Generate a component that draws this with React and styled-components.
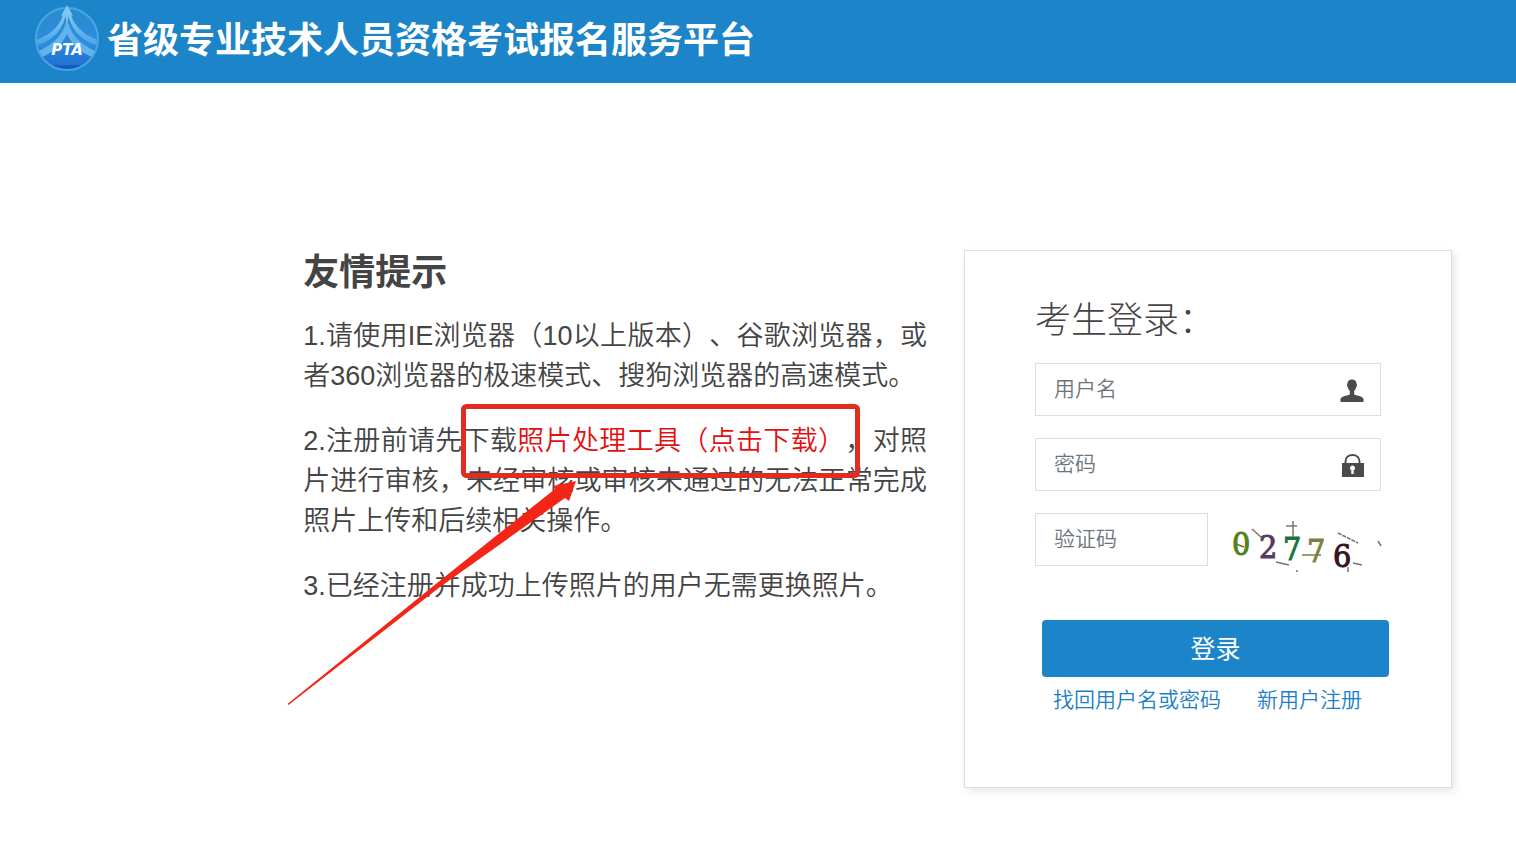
import styled, { createGlobalStyle } from 'styled-components';
import React, { useState } from 'react';

const GlobalStyle = createGlobalStyle`
* {
    box-sizing: border-box;
}
body {
    margin: 0;
    background: #fff;
    color: #444;
    font-family: "Liberation Sans", "Noto Sans CJK SC", sans-serif;
    text-spacing-trim: space-all;
}
`

const Logo = () => (
    <svg width="68" height="72" viewBox="0 0 68 72" role="img" aria-label="PTA">
        <defs>
            <linearGradient id="ball" x1="0" y1="0" x2="0" y2="1">
                <stop offset="0" stopColor="#2a8bcd" />
                <stop offset="0.6" stopColor="#2b8de0" />
                <stop offset="1" stopColor="#0c55bd" />
            </linearGradient>
            <linearGradient id="ray" x1="0" y1="0" x2="0" y2="1">
                <stop offset="0" stopColor="#86ccf4" />
                <stop offset="1" stopColor="#4aa4e6" />
            </linearGradient>
            <clipPath id="round">
                <circle cx="34" cy="36" r="32" />
            </clipPath>
        </defs>
        <circle cx="34" cy="36" r="32" fill="url(#ball)" />
        <g clipPath="url(#round)">
            <path d="M31 8C29 20 20 31 3 37L5 42C22 37 31 24 33 10Z" fill="url(#ray)" />
            <path d="M37 8C39 20 48 31 65 37L63 42C46 37 37 24 35 10Z" fill="url(#ray)" />
            <path d="M34 14C32 29 23 40 6 48L9 54C20 50 29 42 34 31C39 42 48 50 59 54L62 48C45 40 36 29 34 14Z" fill="#62b3eb" />
            <path d="M34 31C29 42 20 50 9 54L14 62H54L59 54C48 50 39 42 34 31Z" fill="#2a7fd8" opacity="0.6" />
        </g>
        <circle cx="34" cy="36" r="31" fill="none" stroke="#4ba5e0" strokeWidth="2" />
        <path d="M34 2L28 13L32 12L34 20L36 12L40 13Z" fill="#7dc6f1" />
        <text x="34" y="52" textAnchor="middle" fill="#fff" fontFamily="DejaVu Sans" fontSize="15" fontWeight="700" fontStyle="italic">PTA</text>
    </svg>
)

const UserIcon = () => (
    <svg width="24" height="24" viewBox="0 0 24 24" fill="#4b4b4b">
        <path d="M12 1.500C9 1.500 7.300 3.500 7.300 6.300C6.600 6.500 7 8.500 7.800 9.100C8.200 11 9 12.200 9.800 13V16.500C7 18 0.500 18 0.500 21.500V24H23.500V21.500C23.500 18 17 18 14.200 16.500V13C15 12.200 15.800 11 16.200 9.100C17 8.500 17.400 6.500 16.700 6.300C16.700 3.500 15 1.500 12 1.500Z" />
    </svg>
)

const LockIcon = () => (
    <svg width="24" height="24" viewBox="0 0 24 24">
        <path d="M5.500 11V8.500C5.500 4.500 8.500 2 12.500 2S19.500 4.500 19.500 8.500V11" fill="none" stroke="#4b4b4b" strokeWidth="2" />
        <path d="M2 10H24V24H2Z" fill="#4b4b4b" />
        <path d="M12.500 12.500A2.500 2.500 0 0 0 11.300 17.200V21H13.700V17.200A2.500 2.500 0 0 0 12.500 12.500Z" fill="#fff" />
    </svg>
)

const digits = [
    { value: "0", x: 2, y: 42, color: "#55801c" },
    { value: "2", x: 29, y: 45, color: "#573a5c" },
    { value: "7", x: 53, y: 47, color: "#17733b" },
    { value: "7", x: 77, y: 49, color: "#7d7e45" },
    { value: "6", x: 103, y: 54, color: "#35161f" },
]

const Captcha = () => (
    <svg width="152" height="66" viewBox="0 0 152 66" role="img" aria-label="验证码图片">
        <g fontFamily="DejaVu Serif Condensed, DejaVu Serif" fontSize="32" strokeWidth="1">
            {digits.map((d, i) => <text key={i} x={d.x} y={d.y} fill={d.color} stroke={d.color}>{d.value}</text>)}
        </g>
        <g fill="none" stroke="#80716f" strokeWidth="1.500">
            <path d="M22 16L32 25M63 8V24M56 13H67M46 49L59 52M67 57V59M123 50L132 52M118 54V59M148 28L151 33" />
            <path d="M108 20L128 30" strokeDasharray="4 1" />
            <path d="M72 42H91" stroke="#7d7e45" />
            <path d="M6 31L14 34" stroke="#55801c" />
        </g>
    </svg>
)

const App = () => {
    const [userName, setUserName] = useState("");
    const [password, setPassword] = useState("");
    const [code, setCode] = useState("");

    function handleSubmit (event) {
        event.preventDefault();
    };

return (
    <>
        <GlobalStyle />
        <Header>
            <Logo />
            <SiteTitle>省级专业技术人员资格考试报名服务平台</SiteTitle>
        </Header>
        <Main>
            <Tips>
                <TipsTitle>友情提示</TipsTitle>
                <Tip>1.请使用IE浏览器（10以上版本）、谷歌浏览器，或者360浏览器的极速模式、搜狗浏览器的高速模式。</Tip>
                <Tip>2.注册前请先下载<ToolLink href="#download">照片处理工具（点击下载）</ToolLink>，对照片进行审核，未经审核或审核未通过的无法正常完成照片上传和后续相关操作。</Tip>
                <Tip>3.已经注册并成功上传照片的用户无需更换照片。</Tip>
                <Marker width="576" height="304" viewBox="0 0 576 304" aria-hidden="true">
                    <rect x="176.500" y="3.500" width="394" height="69" rx="3" fill="none" stroke="#e22c20" strokeWidth="5" />
                    <path d="M0.500 301L150 180L268 86L266 83L289 78L282 98L278 95L153 184L1.500 302Z" fill="#f32517" />
                </Marker>
            </Tips>
            <LoginCard onSubmit={handleSubmit}>
                <LoginTitle>考生登录：</LoginTitle>
                <Field>
                    <Input aria-label="用户名" placeholder="用户名" value={userName} onChange={event => setUserName(event.target.value)} />
                    <UserIcon />
                </Field>
                <Field>
                    <Input aria-label="密码" type="password" placeholder="密码" value={password} onChange={event => setPassword(event.target.value)} />
                    <LockIcon />
                </Field>
                <CodeRow>
                    <Field>
                        <Input aria-label="验证码" placeholder="验证码" value={code} onChange={event => setCode(event.target.value)} />
                    </Field>
                    <Captcha />
                </CodeRow>
                <Submit type="submit">登录</Submit>
                <Links>
                    <a href="#recover">找回用户名或密码</a>
                    <a href="#register">新用户注册</a>
                </Links>
            </LoginCard>
        </Main>
    </>
);

};

export default App;


const Header = styled.header`
display: flex;
align-items: flex-start;
gap: 6px;
height: 83px;
padding: 3px 33px 0;
background: #1c84c8;
`

const SiteTitle = styled.h1`
margin: 0;
color: #fff;
font-size: 36px;
line-height: 76px;
font-weight: 700;
`

const Main = styled.main`
display: grid;
grid-template-columns: minmax(0, 1fr) 488px;
align-items: start;
gap: 37px;
padding: 167px 64px 59px 20%;
`

const Tips = styled.section`
position: relative;
`

const TipsTitle = styled.h2`
margin: 0 0 20px;
font-size: 36px;
line-height: 46px;
`

const Tip = styled.p`
margin: 0 0 25px;
font-size: 27px;
line-height: 40px;
font-weight: 350;
text-align: justify;
`

const ToolLink = styled.a`
color: #e60f0f;
text-decoration: none;
`

/* hand-drawn box and arrow lying over the second tip */
const Marker = styled.svg`
position: absolute;
top: 153px;
left: -16px;
pointer-events: none;
`

const LoginCard = styled.form`
display: flex;
flex-direction: column;
padding: 46px 62px 72px 70px;
border: 1px solid #ddd;
box-shadow: 3px 3px 8px rgba(0, 0, 0, 0.1);
`

const LoginTitle = styled.h2`
margin: 0 0 18px;
font-size: 36px;
line-height: 48px;
font-weight: 300;
`

const Field = styled.div`
display: flex;
align-items: center;
height: 53px;
margin: 0 8px 22px 0;
padding: 0 16px 0 18px;
border: 1px solid #ddd;
`

const Input = styled.input`
flex: 1;
min-width: 0;
padding: 0 0 2px;
border: 0;
outline: 0;
background: transparent;
color: #444;
font: inherit;
font-size: 21px;
font-weight: 350;

&::placeholder {
    color: #6c757d;
    opacity: 1;
}
`

const CodeRow = styled.div`
display: grid;
grid-template-columns: 173px 152px;
justify-content: space-between;
margin: 0 7px 41px 0;

${Field} {
    margin: 0;
}
`

const Submit = styled.button`
height: 57px;
margin-left: 7px;
padding: 0 0 4px;
border: 0;
border-radius: 4px;
background: #1c84c8;
color: #fff;
font: inherit;
font-size: 25px;
`

const Links = styled.nav`
display: flex;
gap: 36px;
padding: 8px 0 0 18px;
font-size: 21px;
line-height: 30px;
font-weight: 350;

a {
    color: #1c7fc8;
    text-decoration: none;
}
`
